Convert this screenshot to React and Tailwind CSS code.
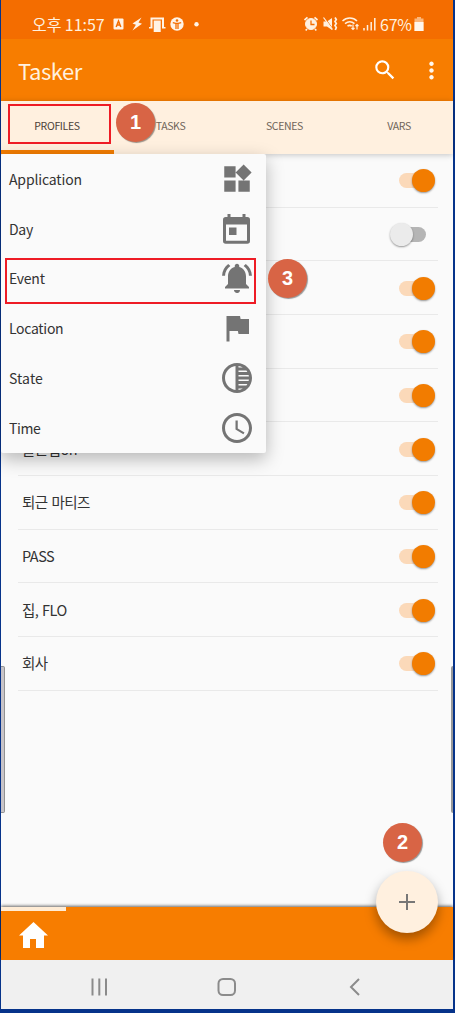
import React from "react";
import { MdWidgets, MdNotificationsActive, MdFlag, MdTonality, MdAccessTime, MdSearch, MdMoreVert } from "react-icons/md";

const profiles = [
  { name: "", on: true },
  { name: "", on: false },
  { name: "", on: true },
  { name: "", on: true },
  { name: "", on: true },
  { name: "출근집on", on: true },
  { name: "퇴근 마티즈", on: true },
  { name: "PASS", on: true },
  { name: "집, FLO", on: true },
  { name: "회사", on: true },
];

function CalendarIcon() {
  return (
    <svg viewBox="0 0 30 32" className="h-8 w-[30px]" fill="#747474">
      <path fillRule="evenodd" d="M5.5 1h3v3h12V1h3v3h1.8A2.7 2.7 0 0 1 28 6.700V28a2.700 2.700 0 0 1-2.700 2.700H3.700A2.700 2.700 0 0 1 1 28V6.700A2.700 2.700 0 0 1 3.700 4h1.800zM4 11.500V27.700h21V11.500z" />
      <path d="M7 14.500h7.500V22H7z" />
    </svg>
  );
}

const events = [
  { name: "Application", icon: <MdWidgets size={34} />, w: "tracking-[-0.150px]" },
  { name: "Day", icon: <CalendarIcon />, w: "tracking-[-0.300px]" },
  { name: "Event", icon: <MdNotificationsActive size={36} />, w: "tracking-[-0.250px]" },
  { name: "Location", icon: <MdFlag size={36} />, w: "tracking-[-0.300px]" },
  { name: "State", icon: <MdTonality size={36} />, w: "tracking-[0.100px]" },
  { name: "Time", icon: <MdAccessTime size={36} />, w: "tracking-[-0.400px]" },
];

function Toggle({ on }) {
  return on ? (
    <div className="relative h-6 w-9 shrink-0">
      <div className="absolute left-0 top-[5px] h-[15px] w-[30px] rounded-full bg-[#fbd9b9]" />
      <div className="absolute right-0 top-px size-[23px] rounded-full bg-[#f27c00] shadow-[0_1px_2px_rgba(0,0,0,0.4)]" />
    </div>
  ) : (
    <div className="relative mr-[9px] h-6 w-9 shrink-0">
      <div className="absolute right-0 top-[5px] h-[15px] w-[30px] rounded-full bg-[#b5b5b5]" />
      <div className="absolute left-0 top-px size-[23px] rounded-full bg-[#ebebeb] shadow-[0_1px_2px_rgba(0,0,0,0.4)]" />
    </div>
  );
}

function Marker({ n, className }) {
  return (
    <div className={"absolute z-30 flex size-[39px] items-center justify-center rounded-full bg-[#d86445] pb-[2px] font-['Liberation_Sans',sans-serif] text-[20px] font-bold text-white shadow-[1px_1px_1px_rgba(0,0,0,0.4)] " + className}>
      {n}
    </div>
  );
}

function NoticeIcons() {
  return (
    <svg viewBox="0 0 92 18" className="ml-[7px] h-[18px] w-[92px]" fill="#fff3e6">
      <rect x="1.500" y="3.500" width="10" height="11" rx="1" />
      <path d="M4.200 12l2.300-6 2.300 6M5.200 10h2.800" stroke="#f46d00" strokeWidth="1.500" fill="none" />
      <path d="M29.500 2.500l-9 6 3.400 1.200-3.400 5.800 9.500-6.700-3.500-1.300z" />
      <path d="M38.500 2.500h13.500v9.500h1.500v1.500H50V4.500h-9.500v9H37V12h1.500z" />
      <path d="M41.700 5.500h7V17h-7z" />
      <circle cx="65" cy="9" r="6.700" />
      <circle cx="65" cy="5.500" r="1.300" fill="#f46d00" />
      <path d="M60.800 7.700l3 .7h2.400l3-.7M64 8.500v5.500M66 8.500v5.500" stroke="#f46d00" strokeWidth="1.300" fill="none" />
      <circle cx="84.500" cy="9.200" r="2.200" />
    </svg>
  );
}

function SystemIcons() {
  return (
    <svg viewBox="0 0 74 18" className="h-[18px] w-[74px]" fill="none" stroke="#fff0df">
      <circle cx="7" cy="9" r="5.500" fill="#fff0df" />
      <path d="M.5 5L3.500 2.300M13.500 5L10.500 2.300M3 14l-1.300 1.500M11 14l1.300 1.500" strokeWidth="1.700" />
      <path d="M7 5.500v4h3.500" stroke="#f46d00" strokeWidth="1.300" />
      <path d="M19.500 6.500h3.500l5-3.500v12L23 11.500h-3.500z" fill="#fff0df" stroke="none" />
      <path d="M20.500 2.500l8 11" stroke="#f46d00" strokeWidth="1" />
      <path d="M19.500 2.500l9 12" strokeWidth="1.200" />
      <path d="M31 2.500l1.300 2-1.300 2 1.300 2-1.300 2 1.300 2-1 2.500" strokeWidth="1.700" />
      <path d="M38.500 6c4.200-4 10.500-4 14.500 0M41 8.700c3-2.500 6.500-2.500 9.500 0M43.500 11.200c1.300-1 3-1 4.200 0" strokeWidth="1.500" />
      <path d="M49 9.500v5M47.500 13l1.500 1.500 1.500-1.500M53 14.500v-5M51.500 11L53 9.500l1.500 1.500" strokeWidth="1.200" />
      <path d="M60 13v2.500M63.500 10v5.500M67.200 7v8.500M70.800 3v12.500" strokeWidth="1.500" />
    </svg>
  );
}

export default function App() {
  return (
    <div className="h-[1013px] w-[455px] overflow-hidden bg-[#06338a] pl-px pr-[2px] font-['Noto_Sans_CJK_KR','Noto_Sans',sans-serif]">
      <div className="relative flex h-[1009px] flex-col bg-[#fafafa]">
        <div className="flex h-[39px] shrink-0 items-center bg-[#f46d00] pl-[31px] pt-[8px] text-[16px] leading-none text-[#fff0df]">
          <span className="w-[73px] whitespace-nowrap tracking-[-0.050px]">오후 11:57</span>
          <NoticeIcons />
          <div className="ml-auto mr-[29px] flex items-center">
            <SystemIcons />
            <span className="ml-[2px] w-[34px] whitespace-nowrap tracking-[-0.200px]">67%</span>
            <svg viewBox="0 0 10 14" className="h-[14px] w-[10px]">
              <path d="M3 0h4v1.500H9.500V14H.5V1.500H3z" fill="#fbb77c" />
              <path d="M.5 5h9v9h-9z" fill="#fff6ec" />
            </svg>
          </div>
        </div>

        <header className="flex h-[62px] shrink-0 items-center bg-[#f77d00] pl-[17px] text-[#fff1df]">
          <h1 className="pb-px text-[22px] leading-none tracking-[-0.450px]">Tasker</h1>
          <MdSearch size={26} className="ml-auto mr-[20px] text-white" />
          <MdMoreVert size={27} className="mr-[8px] text-[#fff8ef]" />
        </header>

        <nav className="relative z-10 grid h-[53px] shrink-0 grid-cols-4 bg-[#fff0df] text-[10.500px] leading-none tracking-[-0.350px] text-[#6f6459] shadow-[0_1px_6px_rgba(0,0,0,0.220)]">
          <div className="flex items-center justify-center border-b-[4px] border-[#f27c00] pr-px pt-px text-[#4b4137]">PROFILES</div>
          <div className="flex items-center justify-center pb-[3px]">TASKS</div>
          <div className="flex items-center justify-center pb-[3px] pl-[2px]">SCENES</div>
          <div className="flex items-center justify-center pb-[3px] pl-[5px]">VARS</div>
        </nav>

        <main className="flex-1 pl-[17px] pr-[15px]">
          {profiles.map((p, i) => (
            <div key={i} className="flex h-[53.670px] items-center justify-between border-b border-[#e9e9e9] pl-[4px] pr-[3px] text-[14.500px] tracking-[-0.500px] text-[#333] [word-spacing:1px]">
              <span>{p.name}</span>
              <Toggle on={p.on} />
            </div>
          ))}
        </main>

        <footer className="relative z-10 flex h-[53px] shrink-0 items-center bg-[#f77d00] pl-[18px] pt-[3px] shadow-[0_-1px_3px_rgba(0,0,0,0.600)]">
          <div className="absolute left-0 top-0 h-[4px] w-[65px] bg-[#ffecd5]" />
          <svg viewBox="0 0 29 26" className="h-[26px] w-[29px]" fill="#fff">
            <path d="M14.500 0L29 13.500h-4V26h-8V17h-6v9H4V13.500H0z" />
          </svg>
        </footer>

        <div className="z-10 flex h-[49px] shrink-0 items-center bg-[#f0f0f0] pl-[89px] pt-[4px]">
          <svg viewBox="0 0 276 20" className="h-5 w-[276px]" fill="none" stroke="#8b8b8b" strokeWidth="2">
            <path d="M2.500 1.500v17M9.300 1.500v17M16 1.500v17" />
            <rect x="128.500" y="2" width="16.500" height="16" rx="4.500" />
            <path d="M269 2l-8 8 8 8" />
          </svg>
        </div>

        <div className="absolute left-0 top-[154px] z-20 h-[299px] w-[265px] rounded-[2px] bg-[#fafafa] shadow-[0_6px_18px_rgba(0,0,0,0.280)]">
          {events.map((e) => (
            <div key={e.name} className="flex h-[49.800px] items-center justify-between pl-[8px] pr-[11px] text-[14px] text-[#333]">
              <span className={"pt-px " + e.w}>{e.name}</span>
              <span className="flex w-9 justify-center text-[#747474]">{e.icon}</span>
            </div>
          ))}
        </div>

        <div className="absolute left-[7px] top-[104px] z-20 h-[40px] w-[103px] border-2 border-[#ee1c25]" />
        <div className="absolute left-[4px] top-[258px] z-20 h-[46px] w-[251px] border-2 border-[#ee1c25]" />
        <Marker n="1" className="left-[115px] top-[103px]" />
        <Marker n="2" className="left-[382px] top-[823px]" />
        <Marker n="3" className="left-[267px] top-[259px]" />

        <div className="absolute left-[375px] top-[871px] z-20 flex size-[62px] items-center justify-center rounded-full bg-[#fff0df] shadow-[0_6px_12px_rgba(0,0,0,0.350)]">
          <svg viewBox="0 0 16 16" className="size-4" stroke="#777" strokeWidth="2">
            <path d="M8 0v16M0 8h16" />
          </svg>
        </div>

        <div className="absolute left-0 top-[666px] h-[147px] w-[4px] rounded-r-[2px] border border-l-0 border-[#929292] bg-[#c8c4c8]" />
        <div className="absolute right-0 top-[666px] h-[147px] w-[2px] rounded-l-[2px] bg-[#999]" />
      </div>
    </div>
  );
}
